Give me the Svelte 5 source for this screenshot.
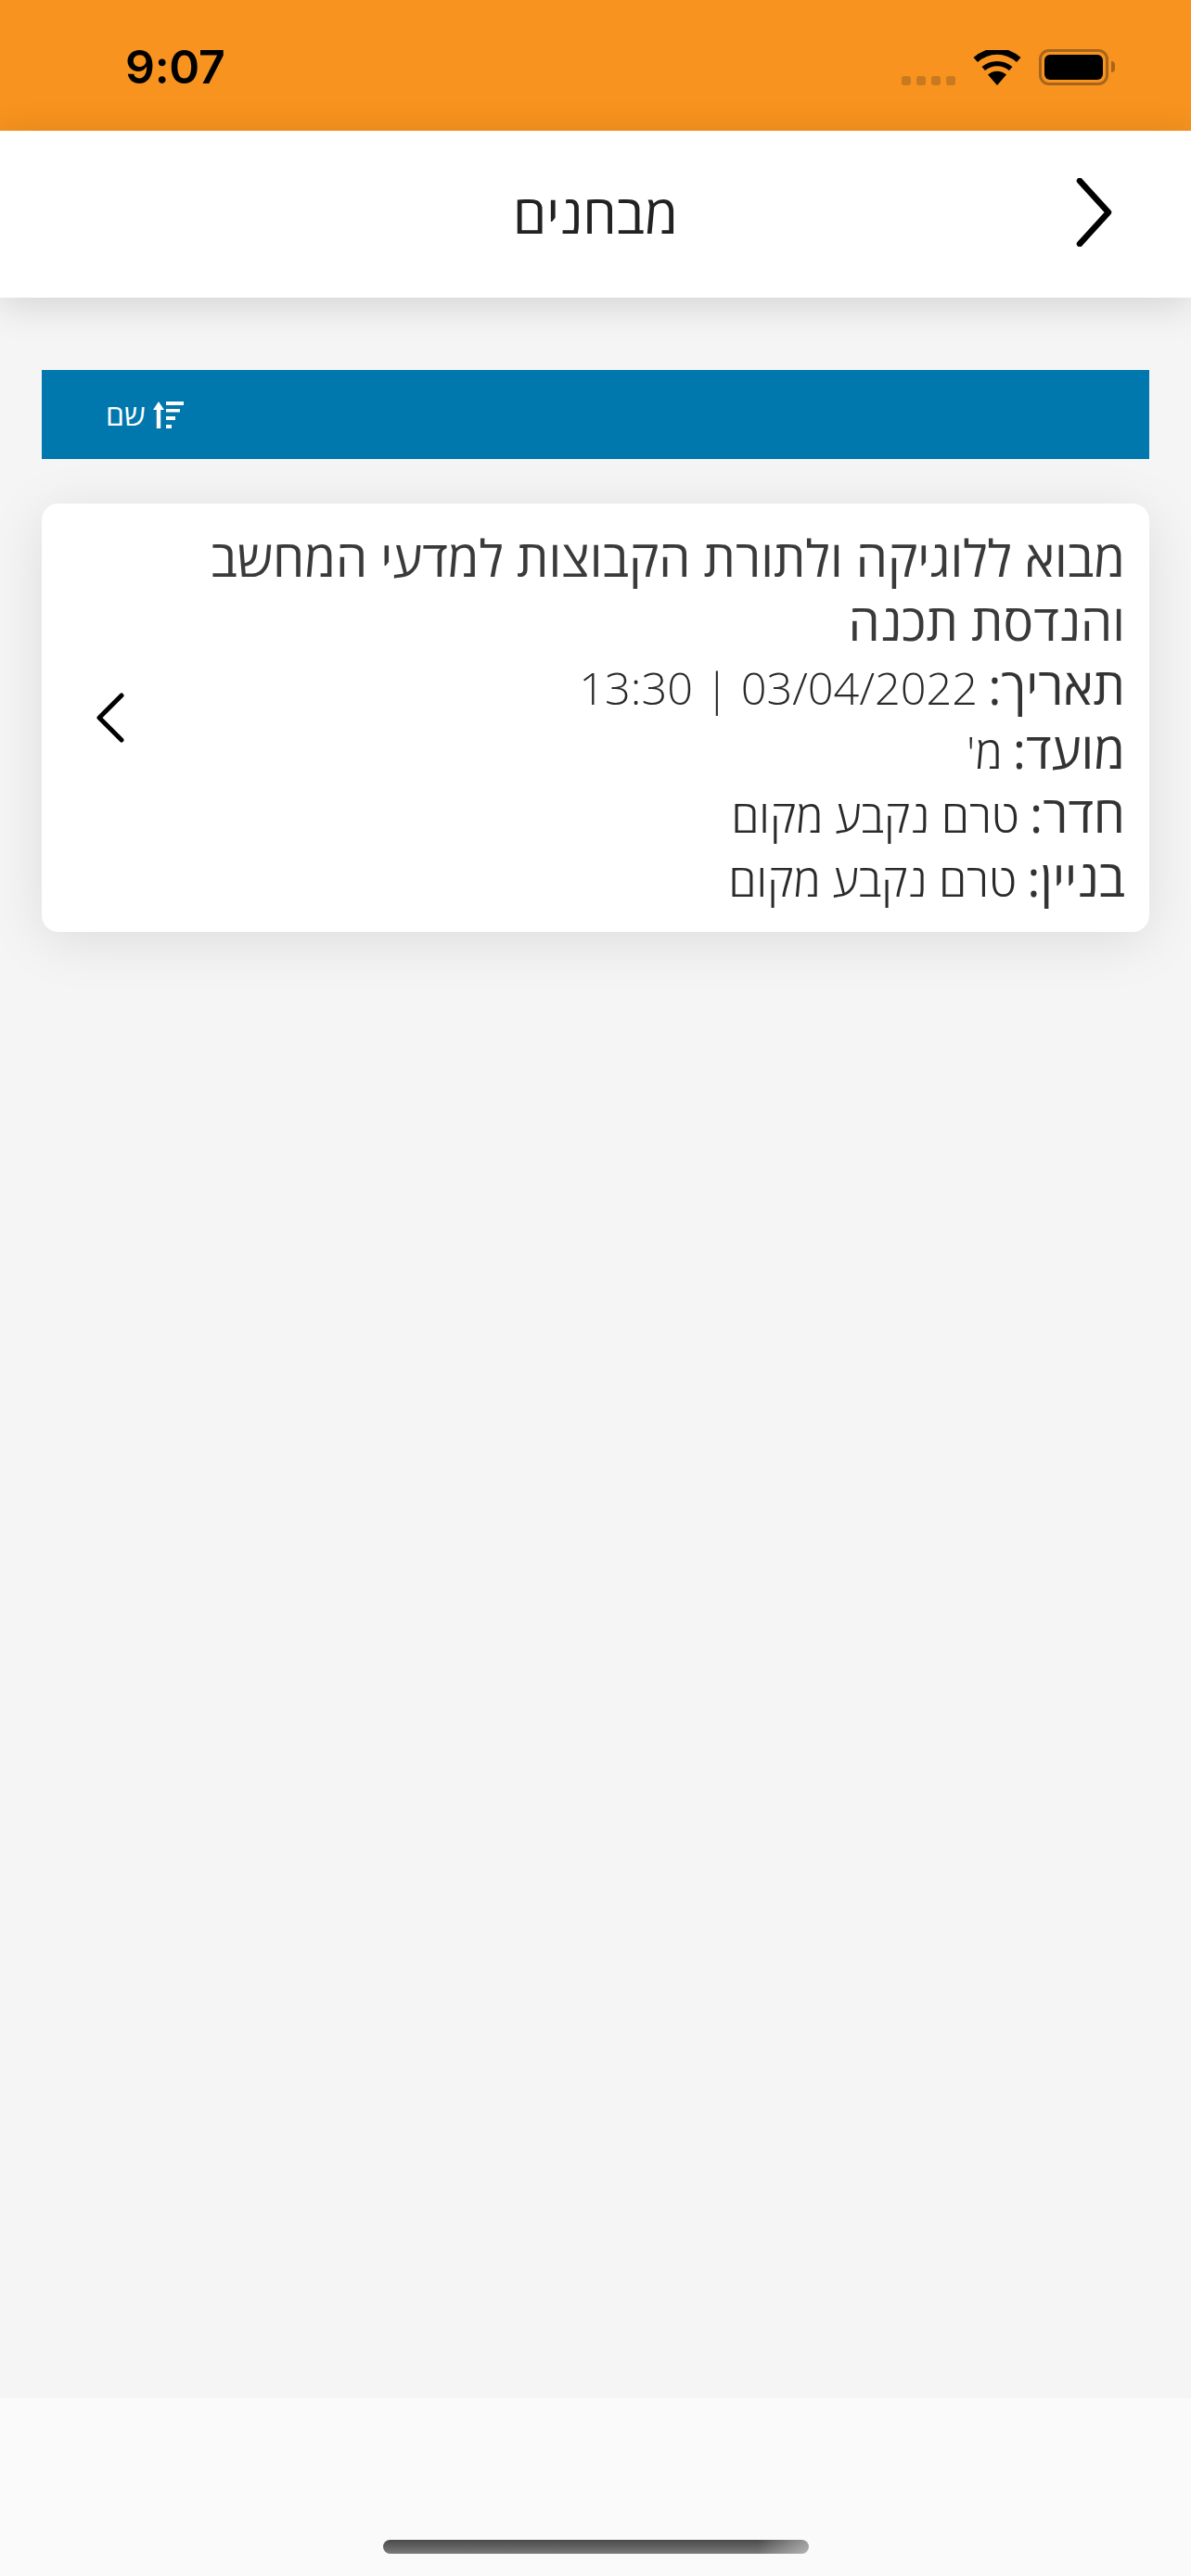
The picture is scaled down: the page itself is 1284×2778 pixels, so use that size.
<script>
  const lines = [
    { label: 'תאריך:', value: '03/04/2022 | 13:30' },
    { label: 'מועד:', value: "מ'" },
    { label: 'חדר:', value: 'טרם נקבע מקום' },
    { label: 'בניין:', value: 'טרם נקבע מקום' }
  ];
</script>

<div class="page" dir="rtl">
  <div class="status" dir="ltr">
    <span class="time">9:07</span>
    <div class="status-icons">
      <div class="dots"><i></i><i></i><i></i><i></i></div>
      <svg class="wifi" width="52" height="38" viewBox="0 0 52 38">
        <path d="M26 38 L16 26.500 A15 15 0 0 1 36 26.500 Z" fill="#000"/>
        <path d="M9.500 20 L13 24 A20 20 0 0 1 39 24 L42.500 20 A25.500 25.500 0 0 0 9.500 20 Z" fill="#000" transform="translate(0 -2)"/>
        <path d="M0.500 11 L5 16 A31 31 0 0 1 47 16 L51.500 11 A38 38 0 0 0 0.500 11 Z" fill="#000" transform="translate(0 -3)"/>
      </svg>
      <div class="battery"><div class="battery-fill"></div><div class="battery-cap"></div></div>
    </div>
  </div>

  <header class="header">
    <h1>מבחנים</h1>
    <svg class="back" width="40" height="74" viewBox="0 0 40 74">
      <path d="M4 3 L35 37 L4 71" fill="none" stroke="#000" stroke-width="6.500" stroke-linecap="round" stroke-linejoin="round"/>
    </svg>
  </header>

  <main class="content">
    <div class="sortbar" dir="ltr">
      <div class="sort">
        <span dir="rtl">שם</span>
        <svg width="33" height="29" viewBox="0 0 33 29">
          <path d="M6 0 L12 9 H8.200 V29 H3.800 V9 H0 Z" fill="#fff"/>
          <path d="M14 0 H33 V4 H14 Z M14 8 H29 V11.500 H14 Z M14 16 H24 V20 H14 Z M14 25 H20 V29 H14 Z" fill="#fff"/>
        </svg>
      </div>
    </div>

    <article class="card">
      <div class="text">
        <div class="title">מבוא ללוגיקה ולתורת הקבוצות למדעי המחשב והנדסת תכנה</div>
        {#each lines as l}
          <div class="row"><span class="label">{l.label}</span><span class="value">{l.value}</span></div>
        {/each}
      </div>
      <svg class="chev" width="34" height="56" viewBox="0 0 34 56">
        <path d="M29 4 L5 28 L29 52" fill="none" stroke="#000" stroke-width="5" stroke-linecap="round" stroke-linejoin="round"/>
      </svg>
    </article>
  </main>

  <footer class="footer"><div class="home"></div></footer>
</div>

<style>
  :global(body) { margin: 0; background: #f5f5f5; }
  .page {
    width: 1284px;
    height: 2778px;
    display: flex;
    flex-direction: column;
    background: #f5f5f5;
    font-family: "Open Sans", "Noto Sans", sans-serif;
    overflow: hidden;
  }
  .status {
    height: 141px;
    flex: none;
    background: #f7931e;
    display: flex;
    justify-content: space-between;
    align-items: flex-start;
    padding: 0 89px 0 135px;
    box-sizing: border-box;
  }
  .time {
    margin-top: 44px;
    font: 600 50px/56px Inter, "Liberation Sans", sans-serif;
    color: #000;
    letter-spacing: -0.3px;
  }
  .status-icons {
    display: flex;
    align-items: flex-end;
    margin-top: 53px;
    height: 39px;
  }
  .dots { display: flex; gap: 6px; margin-right: 19px; }
  .dots i { width: 10px; height: 10px; border-radius: 3px; background: #c77a1f; display: block; }
  .wifi { margin-right: 19px; }
  .battery {
    position: relative;
    width: 75px;
    height: 39px;
    border: 3px solid #a8641c;
    border-radius: 11px;
    box-sizing: border-box;
    padding: 3px;
  }
  .battery-fill { width: 100%; height: 100%; background: #000; border-radius: 6px; }
  .battery-cap {
    position: absolute;
    right: -10px;
    top: 10px;
    width: 4px;
    height: 12px;
    background: #a8641c;
    border-radius: 0 4px 4px 0;
  }
  .header {
    height: 180px;
    flex: none;
    background: #fff;
    box-shadow: 0 8px 40px rgba(0, 0, 0, 0.14);
    display: flex;
    align-items: center;
    justify-content: center;
    position: relative;
    z-index: 1;
  }
  h1 {
    margin: 0;
    font-weight: 400;
    font-size: 58px;
    line-height: 76px;
    color: #222;
    position: relative;
    top: -1px;
  }
  .back { position: absolute; right: 84px; top: 51px; }
  .content {
    flex: 1;
    padding: 78px 45px 0;
  }
  .sortbar {
    height: 96px;
    background: #0077ad;
    display: flex;
    align-items: center;
    padding-left: 69px;
  }
  .sort { display: flex; align-items: center; gap: 8px; color: #fff; font-size: 32px; line-height: 40px; }
  .card {
    margin-top: 48px;
    background: #fff;
    border-radius: 18px;
    box-shadow: 0 10px 60px rgba(0, 0, 0, 0.1);
    display: flex;
    align-items: center;
    justify-content: space-between;
    padding: 21px 26px 21px 0;
    box-sizing: border-box;
    height: 462px;
  }
  .text { flex: 1; color: #3a3a3a; font-size: 54.4px; line-height: 69px; font-weight: 400; padding-left: 80px; }
  .row { height: 69px; }
  .label { color: #333; }
  .value { font-weight: 300; font-size: 48.700px; line-height: 1; color: #2a2a2a; margin-right: 11px; }
  .chev { margin-left: 57px; flex: none; }
  .footer {
    height: 192px;
    flex: none;
    background: #fafafa;
    position: relative;
  }
  .home {
    position: absolute;
    left: 413px;
    top: 153px;
    width: 459px;
    height: 15px;
    border-radius: 8px;
    background: linear-gradient(90deg, transparent 88%, rgba(250, 250, 250, 0.45) 100%), linear-gradient(180deg, #4a4a4a, #7a7a7a);
  }
</style>
